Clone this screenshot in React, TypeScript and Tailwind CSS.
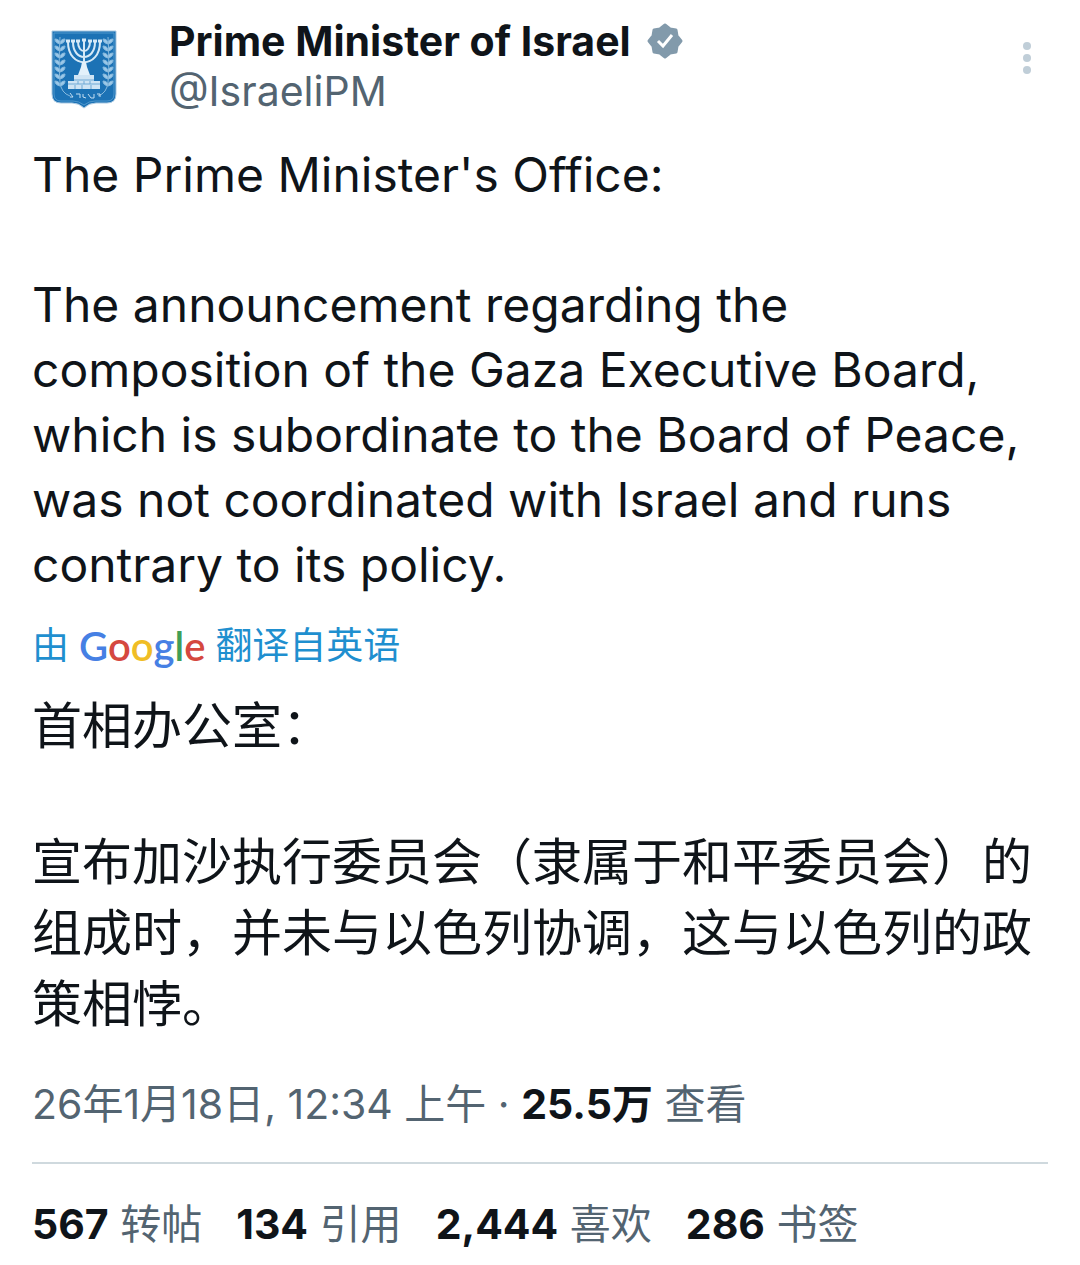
import type { ReactNode } from "react";

const stats = [
  { value: "567", label: "转帖" },
  { value: "134", label: "引用" },
  { value: "2,444", label: "喜欢" },
  { value: "286", label: "书签" },
];

const leafRows = [9, 16, 23, 30, 37, 44, 51];

function Branch() {
  return (
    <g>
      <path d="M9 7 C8 24 8 42 9 52 Q10 63 19 66" />
      {leafRows.map((y) => (
        <g key={y}>
          <path d={`M9 ${y + 5} q-5 -1 -5 -5 q5 0 5 5z`} fill="#9cc8e8" />
          <path d={`M9 ${y + 5} q5 -1 5 -5 q-5 0 -5 5z`} fill="#9cc8e8" />
        </g>
      ))}
    </g>
  );
}

function Emblem() {
  return (
    <svg viewBox="0 0 66 80" className="h-20 w-[66px]" role="img" aria-label="Emblem of Israel">
      <path d="M1 1h64v63q0 9-9 9H45q-7 0-12 5q-5-5-12-5H10q-9 0-9-9z" fill="#1c72b5" stroke="#a9c9e2" strokeWidth="1" />
      <path d="M3 3h60v61q0 7-7 7H44q-6 0-11 4q-5-4-11-4H10q-7 0-7-7z" fill="none" stroke="#4f97cc" strokeWidth="1" />
      <g fill="none" stroke="#86b9de" strokeWidth="1">
        <Branch />
        <g transform="translate(66 0) scale(-1 1)">
          <Branch />
        </g>
      </g>
      <g fill="none" stroke="#d5e9f7" strokeWidth="2">
        <path d="M17 12c0 27 32 27 32 0M22 12c0 20 22 20 22 0M27 12c0 12 12 12 12 0M33 10v34" />
        <path d="M15 11h4M20 11h4M25 11h4M31 10h4M37 11h4M42 11h4M47 11h4" strokeWidth="3" />
      </g>
      <path d="M31 32h4l1 5 3 8H27l3-8z" fill="#e3f1fb" />
      <path d="M23 45h20v6h6v8H17v-8h6z" fill="#cfe4f4" />
      <path d="M17 54h32M23 50h20M27 51v3M33 51v3M39 51v3M24 55v4M31 55v4M40 55v4" stroke="#6fa9d5" strokeWidth="1" />
      <path
        d="M19 63l3 4h-3M25 64h4v4M32 64v3l3 1M37 64l3 4M43 64v4h-3M46 64h3v3"
        fill="none"
        stroke="#c4def2"
        strokeWidth="1"
      />
    </svg>
  );
}

function VerifiedBadge() {
  return (
    <svg viewBox="0 0 36 36" className="size-9" role="img" aria-label="Verified account">
      <path
        d="M18 2L23 6L29 7L30 13L34 18L30 23L29 29L23 30L18 34L13 30L7 29L6 23L2 18L6 13L7 7L13 6z"
        fill="#829aab"
        stroke="#829aab"
        strokeWidth="3"
        strokeLinejoin="round"
      />
      <path d="M11 18l5 5 9-11" fill="none" stroke="#fff" strokeWidth="3" />
    </svg>
  );
}

function GoogleWordmark() {
  return (
    <span className="font-['Lato',sans-serif] text-[40px] font-semibold">
      <span className="text-[#4680e4]">G</span>
      <span className="text-[#d5483f]">o</span>
      <span className="text-[#f0bd25]">o</span>
      <span className="text-[#4680e4]">g</span>
      <span className="text-[#3f9f57]">l</span>
      <span className="text-[#d5483f]">e</span>
    </span>
  );
}

function Strong({ children }: { children: ReactNode }) {
  return <strong className="font-bold text-[#0f1419]">{children}</strong>;
}

export default function App() {
  return (
    <article className="min-h-screen bg-white px-8 pt-4 pb-3 font-['Inter','Noto_Sans_CJK_SC',sans-serif] text-[#0f1419]">
      <header className="flex items-start">
        <div className="w-[137px] pt-[14px] pl-[19px]">
          <Emblem />
        </div>
        <div className="flex-1 text-[41px] leading-[50px]">
          <div className="flex items-center gap-4">
            <h1 className="font-bold">Prime Minister of Israel</h1>
            <VerifiedBadge />
          </div>
          <a href="#profile" className="text-[#536471]">@IsraeliPM</a>
        </div>
        <button type="button" aria-label="More" className="mt-5 px-4 py-1">
          <svg viewBox="0 0 10 36" className="h-9 w-[10px]" fill="#c0ced8">
            <circle cx="5" cy="6" r="4" />
            <circle cx="5" cy="18" r="4" />
            <circle cx="5" cy="30" r="4" />
          </svg>
        </button>
      </header>

      <div className="mt-[26px] text-[48px] leading-[65px]">
        <p>The Prime Minister's Office:</p>
        <p className="mt-[65px]">
          The announcement regarding the
          <br />
          composition of the Gaza Executive Board,
          <br />
          which is subordinate to the Board of Peace,
          <br />
          was not coordinated with Israel and runs
          <br />
          contrary to its policy.
        </p>
      </div>

      <a href="#translate" className="mt-6 flex items-center gap-[10px] text-[37px] leading-[50px] text-[#1f8fcf]">
        <span>由</span>
        <GoogleWordmark />
        <span>翻译自英语</span>
      </a>

      <div lang="zh-CN" className="mt-5 text-[50px] leading-[71px]">
        <p>首相办公室：</p>
        <p className="mt-[65px]">
          宣布加沙执行委员会（隶属于和平委员会）的组成时，并未与以色列协调，这与以色列的政策相悖。
        </p>
      </div>

      <p className="mt-9 text-[41px] leading-[56px] text-[#536471]">
        <time>26年1月18日, 12:34 上午</time> · <Strong>25.5万</Strong> 查看
      </p>

      <footer className="mt-[30px] flex flex-wrap gap-[34px] border-t-2 border-[#cfd9de] pt-8 text-[41px] leading-[56px] text-[#536471]">
        {stats.map((s) => (
          <a key={s.label} href="#stats">
            <Strong>{s.value}</Strong> {s.label}
          </a>
        ))}
      </footer>
    </article>
  );
}
